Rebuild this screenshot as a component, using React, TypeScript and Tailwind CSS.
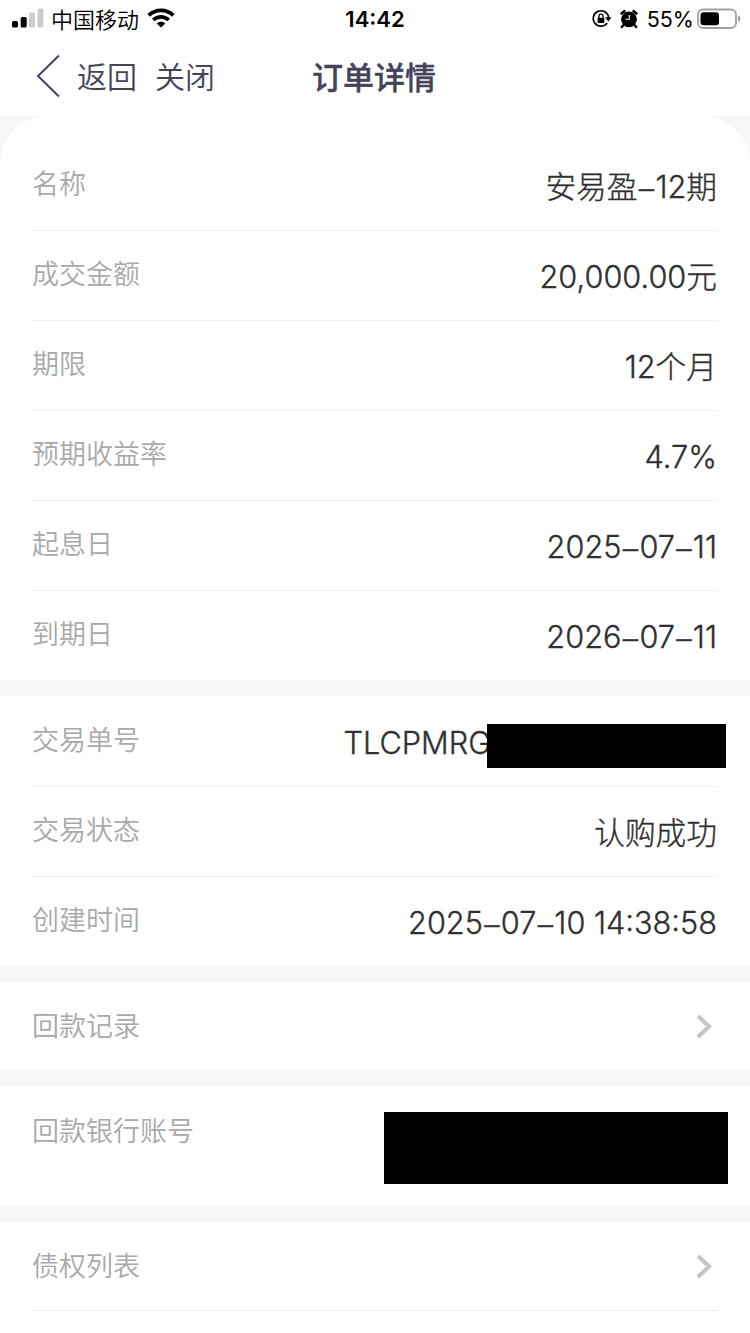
import type { ReactNode } from "react";


function StatusBar() {
  return (
    <div className="flex h-[38px] items-center justify-between pr-[9px] pl-3 text-black">
      <div className="flex w-[240px] items-center">
        <svg className="mt-[-2px]" width="32" height="20" viewBox="0 0 32 20">
          <rect x="0" y="13" width="6" height="6.5" rx="1.6" />
          <rect x="8.7" y="9" width="6" height="10.5" rx="1.6" />
          <rect x="17" y="4.5" width="6" height="15" rx="1.6" fill="#cccccc" />
          <rect x="25.5" y="0.5" width="6" height="19" rx="1.6" fill="#cccccc" />
        </svg>
        <span className="mt-px ml-[7px] text-[22px] leading-none font-[350]">中国移动</span>
        <svg className="-mt-[3px] ml-2" width="28" height="20" viewBox="0 0 28 20">
          <g fill="none" stroke="#000" strokeWidth="3.6">
            <path d="M1.7 7.4C8.6 0.7 19.4 0.7 26.3 7.4" />
            <path d="M6.3 12C10.7 7.8 17.3 7.8 21.7 12" />
          </g>
          <path d="M14 19.6L9.7 15.4C12.2 13.2 15.8 13.2 18.3 15.4Z" />
        </svg>
      </div>
      <span className="-ml-[3px] text-[22px] leading-none font-semibold">14:42</span>
      <div className="flex w-[240px] items-center justify-end">
        <svg width="20" height="20" viewBox="0 0 20 20">
          <path d="M15.2 14A7.7 7.7 0 1 1 16.6 8.5" fill="none" stroke="#000" strokeWidth="1.7" />
          <path d="M13 8.2H19.6L16.3 12.6Z" />
          <rect x="5.6" y="8.7" width="6.8" height="5.3" rx="0.8" />
          <path d="M7 9V7.2a2 2 0 0 1 4 0V9" fill="none" stroke="#000" strokeWidth="1.3" />
        </svg>
        <svg className="ml-[8px]" width="18" height="20" viewBox="0 0 18 20">
          <circle cx="9" cy="10.3" r="7.9" />
          <path d="M1.5 4.5L4.5 2M16.5 4.5L13.5 2M3.5 16L1.8 18M14.5 16L16.2 18" stroke="#000" strokeWidth="2.4" strokeLinecap="round" />
          <path d="M9.3 6V10.3H5.5" fill="none" stroke="#fff" strokeWidth="1.1" />
        </svg>
        <span className="mt-px ml-[9px] text-[21.5px] leading-none">55%</span>
        <svg className="ml-[3px]" width="44" height="22" viewBox="0 0 44 22">
          <rect x="1" y="1.5" width="38" height="18.5" rx="5" fill="none" stroke="#a0a0a0" strokeWidth="1.8" />
          <rect x="3.5" y="4.2" width="18.5" height="13" rx="3" />
          <path d="M41 7.5c3.2 1 3.2 5.500 0 6.500z" fill="#a0a0a0" />
        </svg>
      </div>
    </div>
  );
}


function NavBar() {
  return (
    <header className="flex h-[78px] items-center pl-9 text-[#45435a]">
      <svg className="-mt-0.5" width="25" height="44" viewBox="0 0 25 44">
        <path d="M23 1.5L2 22L23 42.5" fill="none" stroke="currentColor" strokeWidth="2" />
      </svg>
      <span className="ml-4 text-[30px] leading-none font-[350]">返回</span>
      <span className="ml-[18px] text-[30px] leading-none font-[350]">关闭</span>
      <h1 className="ml-[97px] text-[31px] leading-none font-medium [-webkit-text-stroke:0.4px_currentColor]">订单详情</h1>
    </header>
  );
}


function Row({ label, children }: { label: string; children?: ReactNode }) {
  return (
    <div className="mx-8 flex h-[90px] items-center justify-between border-t border-[#f3f3f3] first:border-transparent">
      <span className="pb-[2px] text-[27px] leading-none font-[350] text-[#a9a9a9]">{label}</span>
      {children}
    </div>
  );
}


function Value({ children }: { children: string }) {
  const parts = children.split("–");
  return (
    <span className="mr-px pt-[3px] text-[30.7px] leading-none font-light text-[#303030] [-webkit-text-stroke:0.35px_currentColor]">
      {parts.map((part, i) => (
        <span key={i}>
          {i > 0 && <span className="relative top-[2px] mx-[1.3px]">–</span>}
          {part}
        </span>
      ))}
    </span>
  );
}


function Arrow() {
  return (
    <svg className="-mt-0.5 mr-[4px]" width="18" height="26" viewBox="0 0 18 26">
      <path d="M2 2L13 12.5L2 23" fill="none" stroke="#c4c4c4" strokeWidth="4" />
    </svg>
  );
}


export default function App() {
  return (
    <div className="flex h-[1333px] w-[750px] flex-col overflow-hidden bg-white font-[Inter,'Noto_Sans_CJK_SC',sans-serif]">
      <StatusBar />
      <NavBar />
      <main className="flex flex-1 flex-col gap-4 bg-[#f7f7f7]">
        <section className="rounded-t-[48px] bg-white pt-6">
          <Row label="名称"><Value>安易盈–12期</Value></Row>
          <Row label="成交金额"><Value>20,000.00元</Value></Row>
          <Row label="期限"><Value>12个月</Value></Row>
          <Row label="预期收益率"><Value>4.7%</Value></Row>
          <Row label="起息日"><Value>2025–07–11</Value></Row>
          <Row label="到期日"><Value>2026–07–11</Value></Row>
        </section>
        <section className="bg-white">
          <Row label="交易单号">
            <div className="-mr-2 flex items-center">
              <Value>TLCPMRG</Value>
              <div className="z-10 mt-[9px] -ml-[5px] h-[44px] w-[239px] bg-black" />
            </div>
          </Row>
          <Row label="交易状态"><Value>认购成功</Value></Row>
          <Row label="创建时间"><Value>2025–07–10 14:38:58</Value></Row>
        </section>
        <section className="bg-white">
          <div className="-mb-0.5">
            <Row label="回款记录"><Arrow /></Row>
          </div>
        </section>
        <section className="h-[120px] bg-white">
          <div className="-mr-[10px] flex justify-between">
            <span className="mt-8 ml-8 text-[27px] leading-none font-[350] text-[#a9a9a9]">回款银行账号</span>
            <div className="mt-[26px] mr-8 h-[72px] w-[344px] bg-black" />
          </div>
        </section>
        <section className="flex-1 bg-white">
          <div className="-mb-0.5">
            <Row label="债权列表"><Arrow /></Row>
          </div>
          <div className="mx-8 border-t border-[#ececec]" />
        </section>
      </main>
    </div>
  );
}
